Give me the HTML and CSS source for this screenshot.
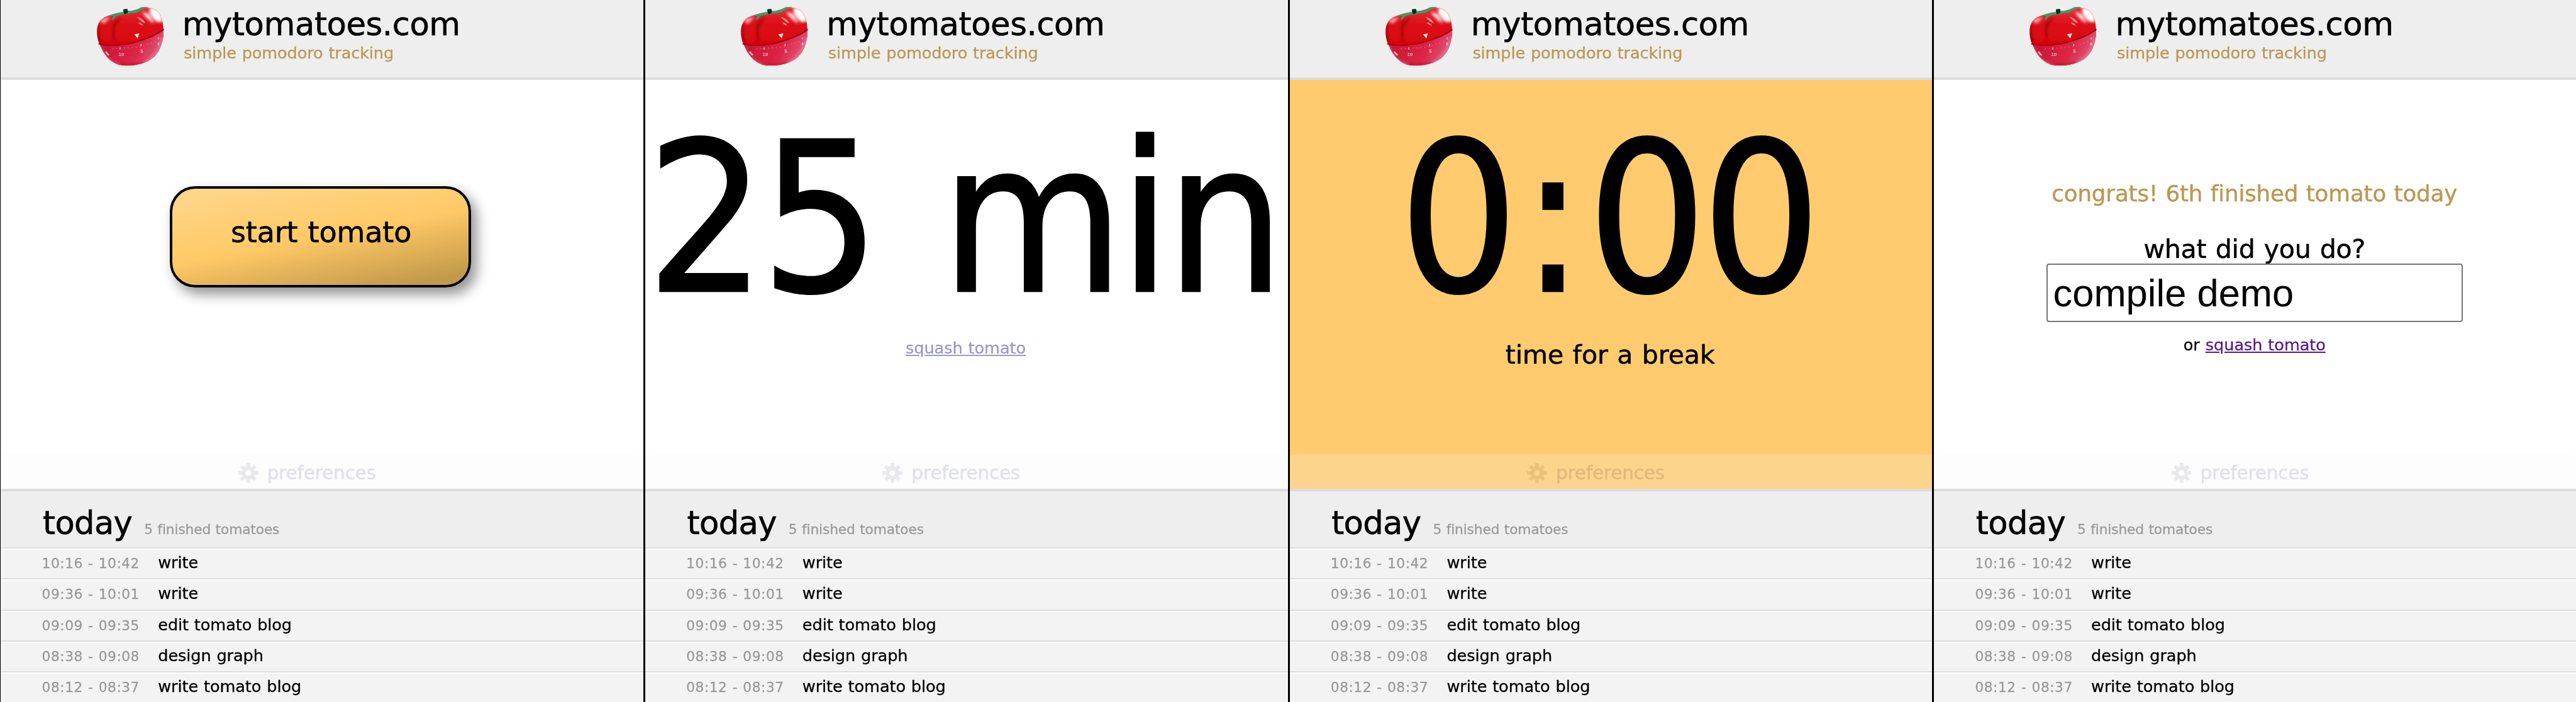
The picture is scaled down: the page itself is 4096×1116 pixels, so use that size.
FILE: index.html
```
<!DOCTYPE html>
<html lang="en">
<head>
<meta charset="utf-8">
<title>mytomatoes.com</title>
<link rel="stylesheet" href="styles.css">
</head>
<body>
<svg class="defs" width="0" height="0" aria-hidden="true">
  <defs>
    <linearGradient id="skin" x1="0" y1="0" x2="0" y2="1">
      <stop offset="0" stop-color="#e8343c"/><stop offset=".3" stop-color="#dc1018"/><stop offset=".65" stop-color="#d8040c"/><stop offset="1" stop-color="#c8040e"/>
    </linearGradient>
    <linearGradient id="base" x1="0" y1="0" x2="1" y2=".3">
      <stop offset="0" stop-color="#b02a48"/><stop offset=".25" stop-color="#cc1836"/><stop offset=".7" stop-color="#dc2646"/><stop offset="1" stop-color="#e0557a"/>
    </linearGradient>
    <filter id="soft1" x="-20%" y="-20%" width="140%" height="140%"><feGaussianBlur stdDeviation="2.5"/></filter>
    <filter id="soft2" x="-50%" y="-50%" width="200%" height="200%"><feGaussianBlur stdDeviation="8"/></filter>
    <clipPath id="body-clip"><path d="M55 200C54 150 70 118 115 100C170 78 215 72 250 74C300 55 350 42 390 50C440 60 460 110 463 175C467 210 462 240 450 275C430 340 385 375 330 390C290 403 220 408 180 395C130 375 95 330 78 285C64 262 56 235 55 200Z"/></clipPath>
    <symbol id="tomato" viewBox="0 0 510 450">
      <g filter="url(#soft1)">
        <g clip-path="url(#body-clip)">
          <rect x="40" y="30" width="440" height="390" fill="url(#skin)"/>
          <path d="M60 272C130 290 230 282 310 256C380 235 430 212 470 182V420H60Z" fill="url(#base)"/>
          <g filter="url(#soft2)">
            <path d="M165 200C165 160 180 130 215 108C180 112 160 130 150 150C148 200 150 230 160 260Z" fill="#8e0008" opacity=".7"/>
            <path d="M385 46C435 46 458 90 460 130C430 146 405 124 390 97C378 80 373 58 385 46Z" fill="#fff"/>
            <path d="M332 72C350 100 378 132 408 144L374 86Z" fill="#ffe8ec"/>
            <path d="M70 130C90 108 115 108 138 105L100 146Z" fill="#ffc8d0" opacity=".8"/>
            <path d="M62 150C58 190 60 230 74 262" stroke="#5c0612" stroke-width="12" fill="none" opacity=".7"/>
            <path d="M75 290C100 350 140 385 190 398" stroke="#d890a4" stroke-width="9" fill="none" opacity=".8"/>
            <path d="M190 398C250 404 300 400 340 388" stroke="#a80a24" stroke-width="14" fill="none" opacity=".6"/>
            <path d="M456 230C445 300 410 350 350 384" stroke="#f0b0c4" stroke-width="9" fill="none" opacity=".7"/>
          </g>
          <path d="M300 103C322 108 345 122 352 143C340 142 318 125 300 103Z" fill="#ff9ca0" opacity=".8"/>
          <path d="M308 137C322 138 335 146 340 157C326 157 314 148 308 137Z" fill="#ff9ca0" opacity=".8"/>
        </g>
        <path d="M64 269C130 286 230 280 310 253C380 232 430 210 466 180" stroke="#a00414" stroke-width="7" fill="none"/>
        <path d="M110 103C145 90 180 76 216 74L220 56L242 54L246 66C275 70 300 60 318 49C336 41 355 42 372 44C345 52 325 60 305 76C285 84 255 80 240 88C215 92 190 92 172 102C165 112 158 120 148 126C150 115 150 108 156 98C140 98 125 102 110 103Z" fill="#3f9a68"/>
        <path d="M216 58L242 56L244 80L222 88Z" fill="#062a1a"/>
        <path d="M284 211L316 205L305 236Z" fill="#f6dede"/>
        <path d="M197 292V306M326 270V284M433 230V242" stroke="#f0b4c0" stroke-width="6"/>
        <path d="M150 300L310 290L425 252" stroke="#e8788e" stroke-width="5" stroke-dasharray="5 19" fill="none"/>
        <g class="dial">
          <text x="188" y="345">10</text>
          <text x="323" y="325" transform="rotate(-4 323 325)">5</text>
          <path d="M433 262V278M108 318L128 340" stroke="#eeb0be" stroke-width="10"/>
        </g>
      </g>
    </symbol>
    <symbol id="gear" viewBox="0 0 40 40">
      <g fill="none" stroke="currentColor">
        <circle cx="20" cy="20" r="9.6" stroke-width="7.6"/>
        <path stroke-width="7" d="M20 0V9M20 31V40M0 20H9M31 20H40M6.2 6.2L12 12M28 28L33.8 33.8M33.8 6.2L28 12M12 28L6.2 33.8"/>
      </g>
    </symbol>
  </defs>
</svg>

<div class="board">
  <section class="panel">
    <header class="header">
      <svg class="logo"><use href="#tomato"/></svg>
      <div class="brand"><h1>mytomatoes.com</h1><p>simple pomodoro tracking</p></div>
    </header>
    <main class="main">
      <div class="stage"><div class="start">start tomato</div></div>
      <div class="prefs"><svg class="gear"><use href="#gear"/></svg><span>preferences</span></div>
    </main>
    <section class="history">
      <div class="day"><h2>today</h2><span>5 finished tomatoes</span></div>
      <ul>
        <li><time>10:16 - 10:42</time><span>write</span></li>
        <li><time>09:36 - 10:01</time><span>write</span></li>
        <li><time>09:09 - 09:35</time><span>edit tomato blog</span></li>
        <li><time>08:38 - 09:08</time><span>design graph</span></li>
        <li><time>08:12 - 08:37</time><span>write tomato blog</span></li>
      </ul>
    </section>
  </section>

  <section class="panel">
    <header class="header">
      <svg class="logo"><use href="#tomato"/></svg>
      <div class="brand"><h1>mytomatoes.com</h1><p>simple pomodoro tracking</p></div>
    </header>
    <main class="main">
      <div class="stage">
        <div class="timer">25 min</div>
        <a class="squash squash-faded">squash tomato</a>
      </div>
      <div class="prefs"><svg class="gear"><use href="#gear"/></svg><span>preferences</span></div>
    </main>
    <section class="history">
      <div class="day"><h2>today</h2><span>5 finished tomatoes</span></div>
      <ul>
        <li><time>10:16 - 10:42</time><span>write</span></li>
        <li><time>09:36 - 10:01</time><span>write</span></li>
        <li><time>09:09 - 09:35</time><span>edit tomato blog</span></li>
        <li><time>08:38 - 09:08</time><span>design graph</span></li>
        <li><time>08:12 - 08:37</time><span>write tomato blog</span></li>
      </ul>
    </section>
  </section>

  <section class="panel">
    <header class="header">
      <svg class="logo"><use href="#tomato"/></svg>
      <div class="brand"><h1>mytomatoes.com</h1><p>simple pomodoro tracking</p></div>
    </header>
    <main class="main on-break">
      <div class="stage">
        <div class="timer">0<span class="colon">:</span>00</div>
        <p class="message">time for a break</p>
      </div>
      <div class="prefs"><svg class="gear"><use href="#gear"/></svg><span>preferences</span></div>
    </main>
    <section class="history">
      <div class="day"><h2>today</h2><span>5 finished tomatoes</span></div>
      <ul>
        <li><time>10:16 - 10:42</time><span>write</span></li>
        <li><time>09:36 - 10:01</time><span>write</span></li>
        <li><time>09:09 - 09:35</time><span>edit tomato blog</span></li>
        <li><time>08:38 - 09:08</time><span>design graph</span></li>
        <li><time>08:12 - 08:37</time><span>write tomato blog</span></li>
      </ul>
    </section>
  </section>

  <section class="panel">
    <header class="header">
      <svg class="logo"><use href="#tomato"/></svg>
      <div class="brand"><h1>mytomatoes.com</h1><p>simple pomodoro tracking</p></div>
    </header>
    <main class="main">
      <div class="stage">
        <p class="congrats">congrats! 6th finished tomato today</p>
        <p class="question">what did you do?</p>
        <div class="task-input">compile demo</div>
        <p class="alternative">or <a class="squash">squash tomato</a></p>
      </div>
      <div class="prefs"><svg class="gear"><use href="#gear"/></svg><span>preferences</span></div>
    </main>
    <section class="history">
      <div class="day"><h2>today</h2><span>5 finished tomatoes</span></div>
      <ul>
        <li><time>10:16 - 10:42</time><span>write</span></li>
        <li><time>09:36 - 10:01</time><span>write</span></li>
        <li><time>09:09 - 09:35</time><span>edit tomato blog</span></li>
        <li><time>08:38 - 09:08</time><span>design graph</span></li>
        <li><time>08:12 - 08:37</time><span>write tomato blog</span></li>
      </ul>
    </section>
  </section>
</div>
</body>
</html>
```
FILE: styles.css
```
* { box-sizing: border-box; margin: 0; padding: 0; }

html { font-size: 7.757576px; overflow: hidden; }

body {
  font-family: "DejaVu Sans", Verdana, sans-serif;
  color: #000;
  background: #fff;
  overflow: hidden;
}

h1, h2, p, a, span, time, .start { -webkit-text-stroke: .012em currentColor; }
h1, h2 { font-weight: normal; }
ul { list-style: none; }
.defs { display: block; }

.board {
  display: grid;
  grid-template-columns: repeat(4, 132.08rem);
  width: 528.22rem;
  height: 1116px;
  margin-left: -.22rem;
  overflow: hidden;
}

.panel {
  display: flex;
  flex-direction: column;
  border-left: .4rem solid #000;
  overflow: hidden;
}

.header {
  flex: none;
  display: flex;
  height: 16.4rem;
  padding-left: 17.82rem;
  background: #eee;
  border-bottom: .54rem solid #ddd;
}

.logo { flex: none; width: 17rem; height: 15rem; }
.dial { font: bold 30px "Liberation Sans", sans-serif; fill: #eeb0be; }

.brand { padding: .85rem 0 0 2.35rem; white-space: nowrap; }
.brand h1 { font-size: 6.6rem; line-height: 8rem; letter-spacing: -.008em; }
.brand p {
  padding: .08rem 0 0 .33rem;
  font-size: 3.3rem;
  line-height: 4rem;
  letter-spacing: -.0055em;
  word-spacing: .034em;
  color: #bd9752;
}

.main {
  flex: none;
  display: flex;
  flex-direction: column;
  height: 83.8rem;
  background: #fff;
}
.on-break { background: #ffcb6e; }

.stage {
  flex: 1;
  display: flex;
  flex-direction: column;
  align-items: center;
  padding-right: .3rem;
  white-space: nowrap;
}

.start {
  display: flex;
  align-items: center;
  justify-content: center;
  width: 61.7rem;
  height: 20.8rem;
  margin: 21.7rem .3rem 0 0;
  padding: 0 0 1.9rem .2rem;
  border: .52rem solid #000;
  border-radius: 5.2rem;
  background: linear-gradient(169deg, #ffd588 8%, #ffc966 50%, #c39a4a 92%);
  box-shadow: 1.06rem 1.32rem 2.6rem rgba(0, 0, 0, .42);
  font-size: 5.95rem;
  word-spacing: .034em;
  letter-spacing: -.004em;
}

.timer {
  margin: 7.1rem 1.1rem 0 0;
  font-family: "DejaVu Sans Condensed", "DejaVu Sans", Tahoma, sans-serif;
  font-stretch: condensed;
  font-size: 42.8rem;
  line-height: 43rem;
  letter-spacing: -.025em;
  word-spacing: .056em;
  -webkit-text-stroke: .008em #000;
}
.colon { margin: 0 .0385em; -webkit-text-stroke: inherit; }

.squash {
  font-size: 3.3rem;
  line-height: 4rem;
  word-spacing: .034em;
  letter-spacing: -.003em;
  color: #551a8b;
  text-decoration: underline;
}
.squash-faded { margin-top: 2.86rem; color: #99c; }

.message {
  margin-top: 3.23rem;
  font-size: 5.3rem;
  line-height: 6rem;
  letter-spacing: -.002em;
  word-spacing: .034em;
}

.congrats {
  margin-top: 20.3rem;
  font-size: 4.6rem;
  line-height: 6rem;
  letter-spacing: -.004em;
  word-spacing: .034em;
  color: #bd9752;
}
.question {
  margin-top: 5.34rem;
  font-size: 5.3rem;
  line-height: 6rem;
  letter-spacing: -.006em;
  word-spacing: .034em;
}
.task-input {
  width: 85.3rem;
  height: 12rem;
  padding-left: 1.1rem;
  border: .27rem solid #767676;
  border-radius: .5rem;
  background: #fff;
  font: 7.93rem/11.5rem "Liberation Sans", Arial, sans-serif;
}
.alternative {
  margin-top: 2.7rem;
  font-size: 3.3rem;
  line-height: 4rem;
  word-spacing: .034em;
}

.prefs {
  display: flex;
  align-items: center;
  height: 7.1rem;
  padding: .6rem 0 0 48.67rem;
  border-radius: 2.6rem 2.6rem 0 0 / .5rem .5rem 0 0;
  background: #fdfdfd;
  color: #e0e0ec;
  font-size: 3.83rem;
  line-height: 5rem;
  letter-spacing: -.01em;
}
.gear { width: 4.1rem; height: 4.1rem; margin-right: 1.82rem; color: #e8e8ec; }
.on-break .prefs { background: #fdd48c; color: #e1b97c; }
.on-break .gear { color: #ecc27b; }

.history {
  flex: 1;
  min-height: 0;
  background: #eee;
  border-top: .54rem solid #ddd;
}

.day {
  display: flex;
  align-items: baseline;
  height: 11.46rem;
  padding: 2.4rem 0 0 8.6rem;
  white-space: nowrap;
}
.day h2 { font-size: 6.6rem; line-height: 8rem; letter-spacing: -.013em; }
.day span {
  margin-left: 2.45rem;
  font-size: 2.8rem;
  letter-spacing: -.006em;
  word-spacing: .034em;
  color: #999;
}

.history li {
  display: grid;
  grid-template-columns: 23.8rem auto;
  align-items: baseline;
  height: 6.34rem;
  padding-left: 8.42rem;
  border-top: .27rem solid #ddd;
  background: #f3f3f3;
  box-shadow: inset 0 .27rem #fff;
  font-size: 3.3rem;
  line-height: 5.75rem;
  letter-spacing: -.004em;
  word-spacing: .034em;
  white-space: nowrap;
}
.history time { font-size: 2.8rem; letter-spacing: .024em; color: #999; }
```
